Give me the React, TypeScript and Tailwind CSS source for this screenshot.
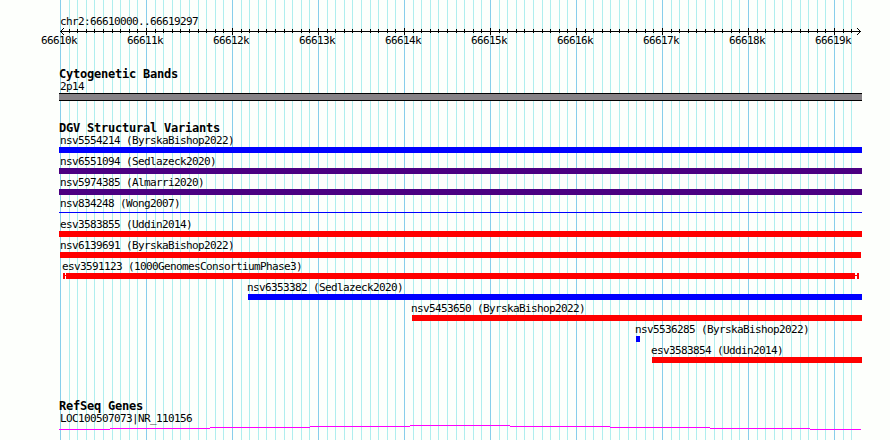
import clsx from "clsx";

const AXIS_START = 60;
const STEP = 8.6; // pixels per 100 bp
const TICKS = Array.from({ length: 93 }, (_, i) => ({
  x: Math.round(AXIS_START + i * STEP),
  major: i % 10 === 0,
}));

type Variant = {
  name: string;
  start: number;
  end: number;
  color: string;
  kind?: "line" | "capped";
};

const variants: Variant[] = [
  { name: "nsv5554214 (ByrskaBishop2022)", start: 59, end: 862, color: "bg-[#0000ff]" },
  { name: "nsv6551094 (Sedlazeck2020)", start: 59, end: 862, color: "bg-[#4b0082]" },
  { name: "nsv5974385 (Almarri2020)", start: 59, end: 862, color: "bg-[#4b0082]" },
  { name: "nsv834248 (Wong2007)", start: 59, end: 862, color: "bg-[#0000ff]", kind: "line" },
  { name: "esv3583855 (Uddin2014)", start: 59, end: 862, color: "bg-[#ff0000]" },
  { name: "nsv6139691 (ByrskaBishop2022)", start: 60, end: 861, color: "bg-[#ff0000]" },
  { name: "esv3591123 (1000GenomesConsortiumPhase3)", start: 63, end: 859, color: "bg-[#ff0000]", kind: "capped" },
  { name: "nsv6353382 (Sedlazeck2020)", start: 248, end: 862, color: "bg-[#0000ff]" },
  { name: "nsv5453650 (ByrskaBishop2022)", start: 412, end: 862, color: "bg-[#ff0000]" },
  { name: "nsv5536285 (ByrskaBishop2022)", start: 636, end: 640, color: "bg-[#0000ff]" },
  { name: "esv3583854 (Uddin2014)", start: 652, end: 862, color: "bg-[#ff0000]" },
];

const kilobases = [66610, 66611, 66612, 66613, 66614, 66615, 66616, 66617, 66618, 66619];

// x ranges of the intron line and the y each one sits on
const geneSegments = [
  [59, 110, 4],
  [110, 210, 3],
  [210, 310, 2],
  [310, 410, 1],
  [410, 510, 0],
  [510, 610, 1],
  [610, 710, 2],
  [710, 810, 3],
  [810, 861, 4],
];

function GridLines() {
  return (
    <svg className="absolute inset-0" width="890" height="440" shapeRendering="crispEdges">
      {TICKS.map((t) => (
        <rect key={t.x} x={t.x} y="0" width="1" height="440" fill={t.major ? "#87ceeb" : "#afeeee"} />
      ))}
    </svg>
  );
}

function Ruler() {
  return (
    <svg className="block" width="890" height="7" shapeRendering="crispEdges">
      <rect x="60" y="3" width="801" height="1" />
      {TICKS.slice(1).map((t) => (
        <rect key={t.x} x={t.x} y={t.major ? 0 : 1} width="1" height={t.major ? 7 : 4} />
      ))}
      {[1, 2, 3].map((d) => (
        <g key={d}>
          <rect x={60 + d} y={3 - d} width="1" height="1" />
          <rect x={60 + d} y={3 + d} width="1" height="1" />
          <rect x={860 - d} y={3 - d} width="1" height="1" />
          <rect x={860 - d} y={3 + d} width="1" height="1" />
        </g>
      ))}
    </svg>
  );
}

function Heading({ children }: { children: string }) {
  return (
    <h2 className="h-[13px] pl-[59px] text-[12px] leading-3 font-bold tracking-[-0.224px]">{children}</h2>
  );
}

function VariantRow({ name, start, end, color, kind }: Variant) {
  const textStart = kind === "capped" ? 62 : Math.max(60, start - 1);
  return (
    <div className="h-[21px]">
      <div className="h-3" style={{ paddingLeft: textStart }}>
        {name}
      </div>
      <div className="flex h-1.5 items-start" style={{ marginLeft: start, width: end - start }}>
        {kind === "capped" ? (
          <>
            <div className={clsx("h-1.5 w-0.5", color)} />
            <div className={clsx("mt-0.5 h-px w-px", color)} />
            <div className={clsx("h-1.5 flex-1", color)} />
            <div className={clsx("mt-0.5 h-px w-0.5", color)} />
            <div className={clsx("h-1.5 w-0.5", color)} />
          </>
        ) : (
          <div className={clsx("w-full", kind === "line" ? "mt-0.5 h-px" : "h-1.5", color)} />
        )}
      </div>
    </div>
  );
}

export default function App() {
  return (
    <div className="relative h-[440px] w-[890px] overflow-hidden bg-[#fdfffc] font-['DejaVu_Sans_Mono',monospace] text-[11px] leading-3 tracking-[-0.622px] whitespace-pre text-black">
      <GridLines />
      <div className="relative pt-4">
        <div className="h-3 pl-[60px]">chr2:66610000..66619297</div>
        <Ruler />
        <div className="flex h-3 pl-[41px]">
          {kilobases.map((kb) => (
            <div key={kb} className="w-[86px] shrink-0">
              {kb}k
            </div>
          ))}
        </div>

        <section className="mt-[21px]">
          <Heading>Cytogenetic Bands</Heading>
          <div className="h-3 pl-[60px]">2p14</div>
          <div className="ml-[59px] h-2 w-[803px] border-y border-black bg-[#868286]" />
        </section>

        <section className="mt-[21px]">
          <Heading>DGV Structural Variants</Heading>
          {variants.map((v) => (
            <VariantRow key={v.name} {...v} />
          ))}
        </section>

        <section className="mt-[34px]">
          <Heading>RefSeq Genes</Heading>
          <div className="h-3 pl-[60px]">LOC100507073|NR_110156</div>
          <svg className="block" width="890" height="5" shapeRendering="crispEdges">
            {geneSegments.map(([x1, x2, y]) => (
              <rect key={x1} x={x1} y={y} width={x2 - x1} height="1" fill="#ff00ff" />
            ))}
          </svg>
        </section>
      </div>
    </div>
  );
}
